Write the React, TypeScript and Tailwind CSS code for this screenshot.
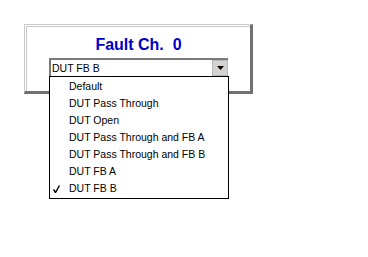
import React from 'react';

const items = [
  'Default',
  'DUT Pass Through',
  'DUT Open',
  'DUT Pass Through and FB A',
  'DUT Pass Through and FB B',
  'DUT FB A',
  'DUT FB B',
];

const selected = 'DUT FB B';

export default function App() {
  return (
    <div className="w-[368px] h-[257px] bg-white pt-[24px] pl-[24px] [font-family:'Liberation_Sans',Arial,sans-serif]">
      <div className="relative w-[229px]">
        {/* panel frame: light groove top/left, dark dithered edge right/bottom */}
        <div className="border-t border-l border-[#c8c8c8] border-r-[3px] border-b-[3px] border-r-[#707070] border-b-[#707070]">
          <div className="border-t border-l border-white">
            <div className="border-t border-l border-[#c8c8c8] h-[65px] flex flex-col items-center">
              <div className="mt-[8px] h-[20px] flex items-center text-[16px] font-bold text-[#0000c8] leading-none">
                Fault Ch.&nbsp;&nbsp;0
              </div>
              {/* combo box */}
              <div className="mt-[3px] w-[179px] h-[19px] flex border-t-2 border-l-2 border-[#7a7a7a] bg-white">
                <div className="flex-1 pl-[1px] text-[10.5px] text-black leading-[16px]">{selected}</div>
                <div className="w-[16px] h-[16px] bg-[#d6d2d0] border border-[#b8b8b8] flex items-center justify-center">
                  <svg width="7" height="4" viewBox="0 0 7 4">
                    <path d="M0 0h7L3.5 4z" fill="#000" />
                  </svg>
                </div>
              </div>
            </div>
          </div>
        </div>

        {/* open dropdown menu */}
        <div className="absolute left-[25px] top-[52px] w-[180px] bg-white border border-black py-[1px]">
          {items.map(item => (
            <div key={item} className="relative h-[17px] pl-[19px] flex items-center text-[10.5px] text-black leading-none whitespace-nowrap">
              {item === selected && (
                <svg className="absolute left-[3px] top-[5px]" width="7" height="8" viewBox="0 0 7 8">
                  <path d="M0.5 4.5L2.5 7.5L6.5 0.5" stroke="#000" strokeWidth="1.4" fill="none" />
                </svg>
              )}
              {item}
            </div>
          ))}
        </div>
      </div>
    </div>
  );
}
